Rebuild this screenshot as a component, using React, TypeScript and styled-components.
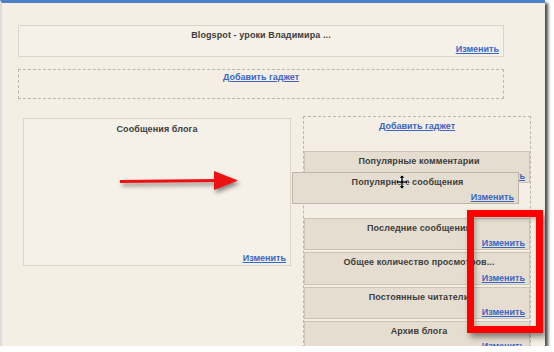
import React from "react";
import styled, { createGlobalStyle } from "styled-components";

const GlobalStyle = createGlobalStyle`
  html, body {
    margin: 0;
    padding: 0;
    background: #ffffff;
  }
  body {
    font-family: "Liberation Sans", Arial, sans-serif;
  }
`;

const Frame = styled.div`
  position: relative;
  box-sizing: border-box;
  width: 545px;
  height: 346px;
  background: #f4eee4;
  border-top: 3px solid #4d80c4;
  border-left: 2px solid #dcdcdc;
  box-shadow: 3px 3px 3px rgba(40, 40, 40, 0.85);
  padding: 22px 0 0 16px;
  overflow: hidden;
`;

const WideBox = styled.div<{ dashed?: boolean }>`
  box-sizing: border-box;
  width: 486px;
  height: ${({ dashed }) => (dashed ? "30px" : "32px")};
  margin-bottom: ${({ dashed }) => (dashed ? "0" : "12px")};
  border: 1px ${({ dashed }) => (dashed ? "dashed #bdb6ab" : "solid #dcd5ca")};
  background: ${({ dashed }) => (dashed ? "transparent" : "#f5f0e8")};
  display: flex;
  flex-direction: column;
  padding: ${({ dashed }) => (dashed ? "2px 4px" : "4px 4px 2px")};
`;

const Title = styled.div`
  text-align: center;
  font-size: 9px;
  font-weight: bold;
  letter-spacing: 0.1px;
  color: #3d3d3d;
  white-space: nowrap;
`;

const EditLink = styled.a`
  margin-top: auto;
  align-self: flex-end;
  font-size: 9px;
  font-weight: bold;
  color: #3a66c6;
  text-decoration: underline;
  cursor: pointer;
`;

const AddLink = styled.a`
  align-self: center;
  font-size: 9px;
  font-weight: bold;
  color: #3a66c6;
  text-decoration: underline;
  cursor: pointer;
`;

const Columns = styled.div`
  display: flex;
  align-items: flex-start;
  gap: 12px;
  margin-top: 17px;
  margin-left: 5px;
`;

const LeftBox = styled.div`
  position: relative;
  box-sizing: border-box;
  width: 268px;
  height: 148px;
  margin-top: 2px;
  border: 1px solid #dcd5ca;
  background: #f5f0e8;
  display: flex;
  flex-direction: column;
  padding: 5px 4px 2px;
`;

const RightColumn = styled.div`
  position: relative;
  box-sizing: border-box;
  width: 228px;
  border: 1px dashed #bdb6ab;
  border-bottom: none;
  display: flex;
  flex-direction: column;
  gap: 2px;
  padding-top: 4px;
`;

const AddRow = styled.div`
  display: flex;
  flex-direction: column;
  height: 28px;
`;

const Gadget = styled.div<{ h?: number }>`
  position: relative;
  box-sizing: border-box;
  height: ${({ h }) => h ?? 32}px;
  border: 1px solid #cdc4b6;
  background: #e5ddd0;
  display: flex;
  flex-direction: column;
  padding: 4px 4px 1px 8px;
  &::before {
    content: "";
    position: absolute;
    left: 1px;
    top: 1px;
    bottom: 1px;
    width: 3px;
    background-image: radial-gradient(#c4bcaf 0.5px, transparent 0.7px);
    background-size: 2px 2px;
  }
`;

const Placeholder = styled.div`
  height: 31px;
`;

const DraggedGadget = styled(Gadget)`
  position: absolute;
  left: -12px;
  top: 55px;
  width: 227px;
  border-color: #bfb6a8;
  z-index: 2;
`;

const MoveCursor = styled.svg`
  position: absolute;
  left: 103px;
  top: 2px;
`;

const Arrow = styled.svg`
  position: absolute;
  left: 94px;
  top: 50px;
  filter: drop-shadow(2px 3px 2px rgba(0, 0, 0, 0.45));
`;

const Highlight = styled.div`
  position: absolute;
  left: 465px;
  top: 207px;
  width: 76px;
  height: 123px;
  box-sizing: border-box;
  border: 7px solid #ff0000;
  box-shadow: 3px 4px 6px rgba(0, 0, 0, 0.45),
    inset 2px 2px 4px rgba(0, 0, 0, 0.25);
  z-index: 3;
`;

const rightGadgets = [
  { title: "Последние сообщения", h: 32 },
  { title: "Общее количество просмотров...", h: 33 },
  { title: "Постоянные читатели", h: 32 },
  { title: "Архив блога", h: 32 },
];

export default function App() {
  return (
    <>
      <GlobalStyle />
      <Frame>
        <WideBox>
          <Title>Blogspot - уроки Владимира ...</Title>
          <EditLink>Изменить</EditLink>
        </WideBox>
        <WideBox dashed>
          <AddLink>Добавить гаджет</AddLink>
        </WideBox>
        <Columns>
          <LeftBox>
            <Title>Сообщения блога</Title>
            <EditLink>Изменить</EditLink>
            <Arrow width="124" height="24" viewBox="0 0 124 24">
              <path d="M2 11 L100 10 L100 13 L2 14 Z" fill="#ee1111" />
              <path d="M96 2 L120 11.5 L96 21 Z" fill="#ee1111" />
            </Arrow>
          </LeftBox>
          <RightColumn>
            <AddRow>
              <AddLink>Добавить гаджет</AddLink>
            </AddRow>
            <Gadget>
              <Title>Популярные комментарии</Title>
              <EditLink>Изменить</EditLink>
            </Gadget>
            <Placeholder />
            {rightGadgets.map((g) => (
              <Gadget key={g.title} h={g.h}>
                <Title>{g.title}</Title>
                <EditLink>Изменить</EditLink>
              </Gadget>
            ))}
            <DraggedGadget>
              <Title>Популярные сообщения</Title>
              <EditLink>Изменить</EditLink>
              <MoveCursor width="12" height="14" viewBox="0 0 12 14">
                <path
                  d="M6 0 L9 3 H7 V6 H10 V4 L12 7 L10 10 V8 H7 V11 H9 L6 14 L3 11 H5 V8 H2 V10 L0 7 L2 4 V6 H5 V3 H3 Z"
                  fill="#000"
                  stroke="#fff"
                  strokeWidth="0.6"
                />
              </MoveCursor>
            </DraggedGadget>
          </RightColumn>
        </Columns>
        <Highlight />
      </Frame>
    </>
  );
}
